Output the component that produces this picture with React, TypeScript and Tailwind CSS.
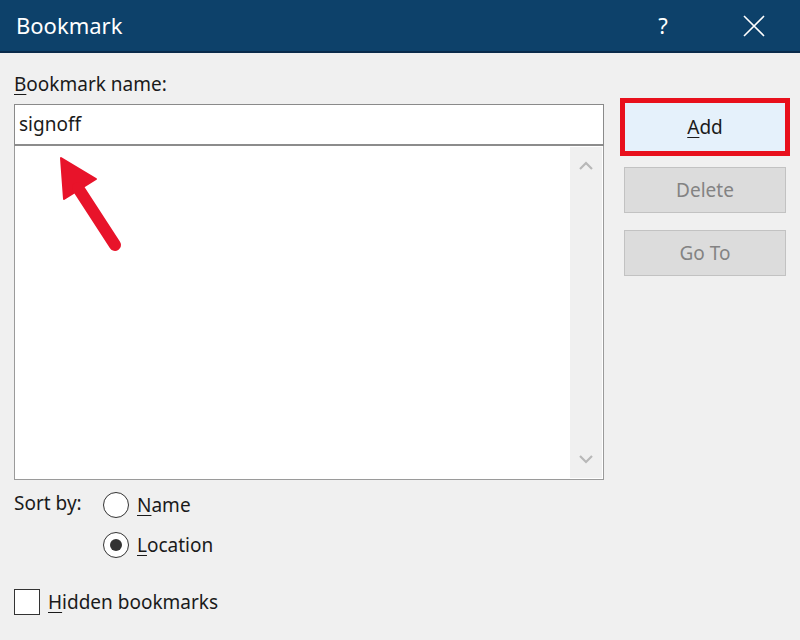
import React from "react";

const font = { fontFamily: '"Noto Sans", "Open Sans", sans-serif' };

const Chevron = ({ up }: { up?: boolean }) => (
  <svg width="16" height="10" viewBox="0 0 16 10">
    <path
      d={up ? "M2 8 L8 2 L14 8" : "M2 2 L8 8 L14 2"}
      fill="none"
      stroke="#b8b8b8"
      strokeWidth="2.2"
    />
  </svg>
);

const Radio = ({ checked }: { checked?: boolean }) => (
  <div className="w-[26px] h-[26px] rounded-full border-[1.5px] border-[#333] bg-white flex items-center justify-center">
    {checked && <div className="w-[12px] h-[12px] rounded-full bg-[#333]" />}
  </div>
);

const App = () => {
  return (
    <div className="w-[800px] h-[640px] bg-[#f0f0f0] flex flex-col text-[#1a1a1a]" style={font}>
      {/* title bar */}
      <div className="h-[53px] bg-[#0d416a] border-b-2 border-[#0a2b4b] flex items-center pl-[16px] shrink-0">
        <span className="text-white text-[22px] flex-1">Bookmark</span>
        <span className="text-white text-[22px] w-[30px] text-center mr-[64px]">?</span>
        <svg width="24" height="24" viewBox="0 0 24 24" className="mr-[34px]">
          <path d="M2 2 L22 22 M22 2 L2 22" stroke="white" strokeWidth="1.6" />
        </svg>
      </div>

      <div className="flex pl-[14px] pt-[20px]">
        {/* left column */}
        <div className="w-[590px] flex flex-col">
          <div className="text-[19px] leading-[22px] mb-[9px]">
            <span className="underline underline-offset-[3px]">B</span>ookmark name:
          </div>
          <div className="h-[42px] bg-white border border-[#8a8a8a] border-b-2 border-b-[#8c8c8c] flex items-center pl-[4px] text-[19px]">
            signoff
          </div>
          <div className="relative h-[334px] bg-white border border-[#9a9a9a] border-t-0 flex justify-end p-[1px]">
            <div className="w-[32px] bg-[#f0f0f0] flex flex-col items-center justify-between py-[14px]">
              <Chevron up />
              <Chevron />
            </div>
            <svg className="absolute left-[25px] top-0" width="90" height="110" viewBox="0 0 90 110">
              <path d="M21 12 L24 53 L56 33 Z" fill="#e8132a" stroke="#e8132a" strokeWidth="2" strokeLinejoin="round" />
              <path d="M38 42 L75 99" stroke="#e8132a" strokeWidth="12" strokeLinecap="round" />
            </svg>
          </div>

          <div className="flex mt-[11px]">
            <div className="w-[89px] text-[19px] leading-[22px] pt-[1px]">Sort by:</div>
            <div className="flex flex-col gap-[11px]">
              <div className="flex items-center gap-[8px]">
                <Radio />
                <span className="text-[19px]">
                  <span className="underline underline-offset-[3px]">N</span>ame
                </span>
              </div>
              <div className="flex items-center gap-[8px]">
                <Radio checked />
                <span className="text-[19px]">
                  <span className="underline underline-offset-[3px]">L</span>ocation
                </span>
              </div>
            </div>
          </div>

          <div className="flex items-center gap-[8px] mt-[29px]">
            <div className="w-[26px] h-[26px] bg-white border border-[#333]" />
            <span className="text-[19px]">
              <span className="underline underline-offset-[3px]">H</span>idden bookmarks
            </span>
          </div>
        </div>

        {/* right column */}
        <div className="ml-[16px] mt-[25px] w-[170px] flex flex-col">
          <div className="h-[58px] border-[5px] border-[#e8101c] bg-[#e5f1fb] flex items-center justify-center text-[19px]">
            <span>
              <span className="underline underline-offset-[3px]">A</span>dd
            </span>
          </div>
          <div className="mx-[4px] mt-[11px] h-[46px] bg-[#dcdcdc] border border-[#c2c2c2] flex items-center justify-center text-[19px] text-[#838383]">
            Delete
          </div>
          <div className="mx-[4px] mt-[17px] h-[46px] bg-[#dcdcdc] border border-[#c2c2c2] flex items-center justify-center text-[19px] text-[#838383]">
            Go To
          </div>
        </div>
      </div>
    </div>
  );
};

export default App;
